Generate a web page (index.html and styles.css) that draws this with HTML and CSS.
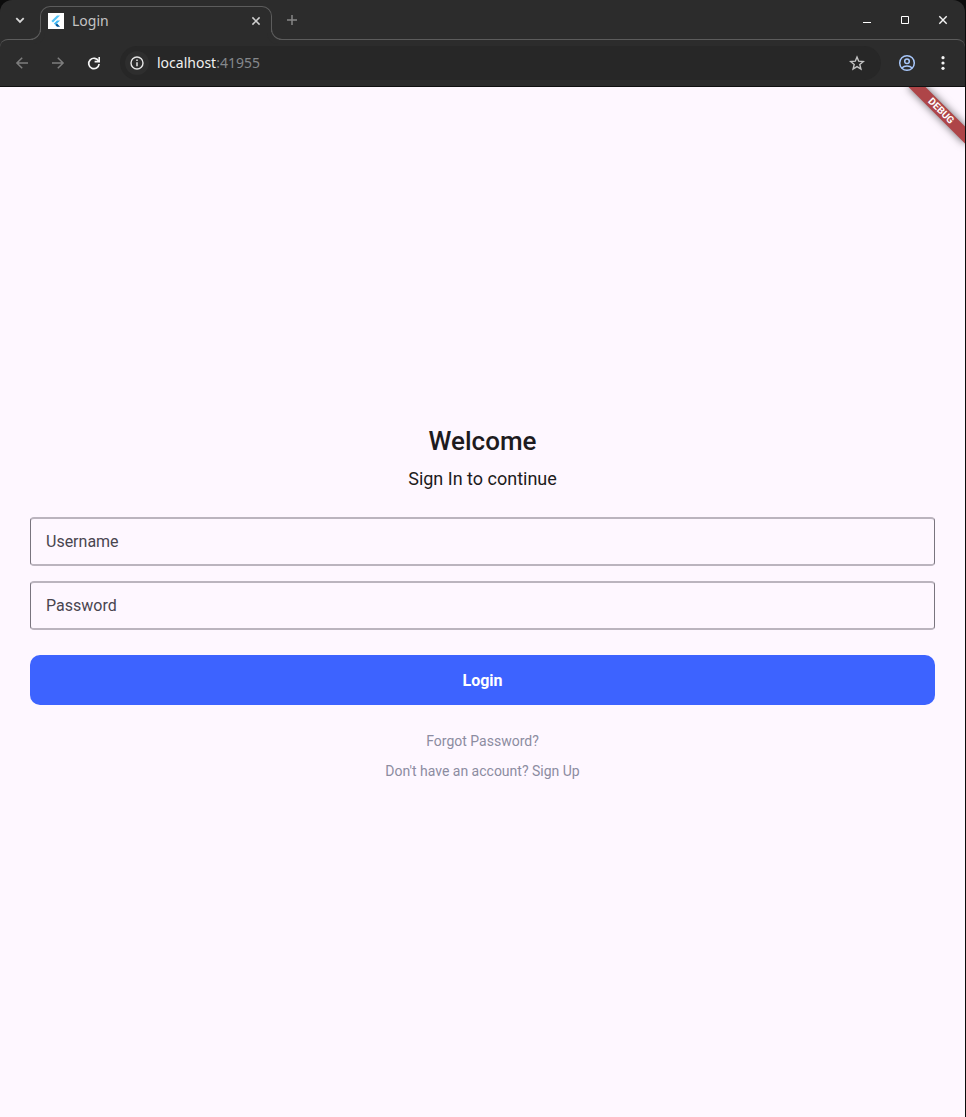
FILE: index.html
```html
<!DOCTYPE html>
<html lang="en">
<head>
<meta charset="utf-8">
<meta name="viewport" content="width=device-width, initial-scale=1">
<title>Login</title>
<link rel="stylesheet" href="styles.css">
</head>
<body>
<div class="window">
  <header class="chrome">
    <div class="tabstrip">
      <button class="icon-btn tab-search" aria-label="Search tabs">
        <svg width="16" height="16" viewBox="0 0 16 16" fill="none"><path d="M4.3 6.2 8 9.9l3.7-3.7" stroke="#d8d8d8" stroke-width="1.8"/></svg>
      </button>
      <div class="tab">
        <svg class="favicon" width="16" height="16" viewBox="0 0 16 16"><path fill="#fff" d="M0 0h16v16H0z"/><path fill="#54c5f8" d="M9 2.400h3.100L5 9.500 3.400 7.900z"/><path fill="#42b9f5" d="M9 7.400h3.100L9 10.500l-1.600 1.600L5.900 10.500z"/><path fill="#01579b" d="m7.400 12.100 1.600-1.600 3.100 3.200H9z"/></svg>
        <span class="tab-title">Login</span>
        <button class="icon-btn tab-close" aria-label="Close tab">
          <svg width="16" height="16" viewBox="0 0 16 16" fill="none"><path d="m4.400 4.400 7.200 7.200m0-7.200-7.200 7.200" stroke="#d0d0d0" stroke-width="1.500"/></svg>
        </button>
      </div>
      <button class="icon-btn tab-new" aria-label="New tab">
        <svg width="16" height="16" viewBox="0 0 16 16" fill="none"><path d="M8 3v10M3 8h10" stroke="#868686" stroke-width="1.5"/></svg>
      </button>
      <div class="window-controls">
        <button class="icon-btn" aria-label="Minimize"><svg width="16" height="16" viewBox="0 0 16 16" fill="none"><path d="M4 10.5h8" stroke="#fff"/></svg></button>
        <button class="icon-btn" aria-label="Maximize"><svg width="16" height="16" viewBox="0 0 16 16" fill="none"><path d="M4.5 4.5h7v7h-7z" stroke="#fff"/></svg></button>
        <button class="icon-btn" aria-label="Close"><svg width="16" height="16" viewBox="0 0 16 16" fill="none"><path d="m4.3 4.3 7.4 7.4m0-7.4-7.4 7.4" stroke="#f5f5f5" stroke-width="1.4"/></svg></button>
      </div>
    </div>
    <div class="toolbar">
      <div class="nav">
        <button class="icon-btn" aria-label="Back"><svg width="16" height="16" viewBox="0 0 16 16" fill="none"><path d="M14 8H3m5.2-5.3L2.900 8l5.300 5.300" stroke="#7d7d7d" stroke-width="1.500"/></svg></button>
        <button class="icon-btn" aria-label="Forward"><svg width="16" height="16" viewBox="0 0 16 16" fill="none"><path d="M2 8h11M7.800 2.700 13.100 8l-5.300 5.300" stroke="#7d7d7d" stroke-width="1.500"/></svg></button>
        <button class="icon-btn" aria-label="Reload"><svg width="16" height="16" viewBox="0 0 16 16" fill="none"><path d="M12.600 6.200A5.200 5.200 0 1 0 13.100 9" stroke="#f5f5f5" stroke-width="1.700"/><path fill="#f5f5f5" d="M14 2v5.400H8.600V5.800h3.800V2z"/></svg></button>
      </div>
      <div class="address">
        <button class="icon-btn site-info" aria-label="View site information"><svg width="16" height="16" viewBox="0 0 16 16" fill="none"><circle cx="8" cy="8" r="6" stroke="#e6e6e6" stroke-width="1.4"/><path d="M8 7.2v4M8 4.6v1.5" stroke="#e6e6e6" stroke-width="1.5"/></svg></button>
        <div class="url" role="textbox" tabindex="0" aria-label="Address bar">localhost<span class="port">:41955</span></div>
        <button class="icon-btn" aria-label="Bookmark this tab"><svg width="16" height="16" viewBox="0 0 16 16" fill="none"><path d="m8 2 1.700 4.200 4.600.4-3.500 2.900 1.100 4.500L8 11.600 4.100 14l1.100-4.500-3.500-2.900 4.600-.4z" stroke="#c4c4c4" stroke-width="1.400"/></svg></button>
      </div>
      <div class="actions">
        <button class="icon-btn" aria-label="Profile"><svg width="18" height="18" viewBox="0 0 18 18" fill="none"><circle cx="9" cy="9" r="7.300" stroke="#a8c7fa" stroke-width="1.500"/><circle cx="9" cy="7.300" r="2.300" stroke="#a8c7fa" stroke-width="1.500"/><path d="M3.800 14c1.300-1.300 3-2 5.200-2s3.900.7 5.200 2" stroke="#a8c7fa" stroke-width="1.500"/></svg></button>
        <button class="icon-btn" aria-label="Menu"><svg width="16" height="16" viewBox="0 0 16 16" fill="#f5f5f5"><circle cx="8" cy="2.700" r="1.600"/><circle cx="8" cy="8" r="1.600"/><circle cx="8" cy="13.300" r="1.600"/></svg></button>
      </div>
    </div>
  </header>
  <main class="page">
    <div class="debug-banner">DEBUG</div>
    <form class="login">
      <h1 class="title">Welcome</h1>
      <p class="subtitle">Sign In to continue</p>
      <div class="fields">
        <input class="field" type="text" name="username" placeholder="Username" aria-label="Username">
        <input class="field" type="password" name="password" placeholder="Password" aria-label="Password">
      </div>
      <button class="submit" type="submit">Login</button>
      <nav class="links">
        <a href="#forgot">Forgot Password?</a>
        <a href="#signup">Don't have an account? Sign Up</a>
      </nav>
    </form>
  </main>
</div>
</body>
</html>
```
FILE: styles.css
```css
* {
  box-sizing: border-box;
}

body {
  margin: 0;
  background: #0c0c0c;
}

button {
  padding: 0;
  border: 0;
  background: none;
  font: inherit;
  cursor: pointer;
}

svg {
  display: block;
}

.window {
  display: flex;
  flex-direction: column;
  min-height: 100vh;
  padding-right: 1px;
}

.chrome {
  background: #2c2c2c;
  border-radius: 12px 12px 0 0;
  border-bottom: 1px solid #111;
  font-family: "Noto Sans", "Open Sans", sans-serif;
  font-size: 14px;
}

.icon-btn {
  display: flex;
  align-items: center;
  justify-content: center;
  flex: none;
  width: 28px;
  height: 28px;
  border-radius: 50%;
}

/* Tab strip */

.tabstrip {
  display: flex;
  align-items: center;
  height: 39px;
  padding: 0 8px 0 6px;
}

.tab {
  position: relative;
  z-index: 1;
  display: flex;
  align-items: center;
  align-self: flex-end;
  width: 232px;
  height: 34px;
  margin: 0 6px -1px;
  padding: 0 1px 6px 7px;
  border: 1px solid #5c5c5c;
  border-bottom: 0;
  border-radius: 10px 10px 0 0;
  background: #2c2c2c;
}

/* Curved feet that join the tab outline to the toolbar line */
.tab::before,
.tab::after {
  content: "";
  position: absolute;
  bottom: 0;
  width: 11px;
  height: 11px;
  border-bottom: 1px solid #5c5c5c;
  background: #2c2c2c;
}

.tab::before {
  right: 100%;
  border-right: 1px solid #5c5c5c;
  border-bottom-right-radius: 11px;
  box-shadow: 4px 4px 0 #2c2c2c;
}

.tab::after {
  left: 100%;
  border-left: 1px solid #5c5c5c;
  border-bottom-left-radius: 11px;
  box-shadow: -4px 4px 0 #2c2c2c;
}

.tab-title {
  flex: 1;
  margin-left: 8px;
  color: #c4c4c4;
  line-height: 20px;
}

.window-controls {
  display: flex;
  gap: 10px;
  margin-left: auto;
}

/* Toolbar */

.toolbar {
  display: flex;
  align-items: center;
  height: 47px;
  padding: 0 8px;
  border-top: 1px solid #5c5c5c;
  border-radius: 8px 8px 0 0;
}

.nav,
.actions {
  display: flex;
  gap: 8px;
}

.address {
  display: flex;
  align-items: center;
  flex: 1;
  height: 34px;
  margin: 0 12px;
  padding: 0 10px 0 5px;
  border-radius: 17px;
  background: #272727;
}

.site-info {
  width: 24px;
  height: 24px;
  background: #2e2e2e;
}

.url {
  flex: 1;
  margin-left: 8px;
  color: #f0f0f0;
  line-height: 20px;
}

.port {
  color: #85888c;
}

/* Page */

.page {
  position: relative;
  display: flex;
  flex: 1;
  flex-direction: column;
  justify-content: center;
  overflow: hidden;
  padding: 24px 30px;
  background: #fef7ff;
  color: #1d1b20;
  font-family: Roboto, sans-serif;
}

.debug-banner {
  position: absolute;
  top: 18px;
  right: -16px;
  width: 80px;
  height: 12px;
  background: #ae4548;
  box-shadow: 0 0 9px rgba(0, 0, 0, 0.6);
  color: #fff;
  font-size: 10px;
  font-weight: 700;
  line-height: 12px;
  text-align: center;
  transform: rotate(45deg);
}

.login {
  display: flex;
  flex-direction: column;
}

.title {
  margin: 0;
  font-size: 26px;
  font-weight: 500;
  line-height: 36px;
  text-align: center;
}

.subtitle {
  margin: 8px 0 26px;
  font-size: 18px;
  line-height: 24px;
  text-align: center;
}

.fields {
  display: flex;
  flex-direction: column;
  gap: 15px;
}

.field {
  width: 100%;
  height: 49px;
  padding: 0 15px;
  border: solid #79747e;
  border-width: 2px 1px;
  border-top-color: #bbb4be;
  border-bottom-color: #bbb4be;
  border-radius: 4px;
  background: transparent;
  color: #1d1b20;
  font-family: inherit;
  font-size: 16px;
}

.field::placeholder {
  color: #49454f;
  opacity: 1;
}

.submit {
  height: 50px;
  margin: 25px 0 26px;
  border-radius: 10px;
  background: #3d63ff;
  color: #fff;
  font-size: 16px;
  font-weight: 700;
}

.links {
  display: flex;
  flex-direction: column;
  align-items: center;
  gap: 10px;
}

.links a {
  color: #8c8ca1;
  font-size: 14px;
  line-height: 20px;
  text-decoration: none;
}
```
